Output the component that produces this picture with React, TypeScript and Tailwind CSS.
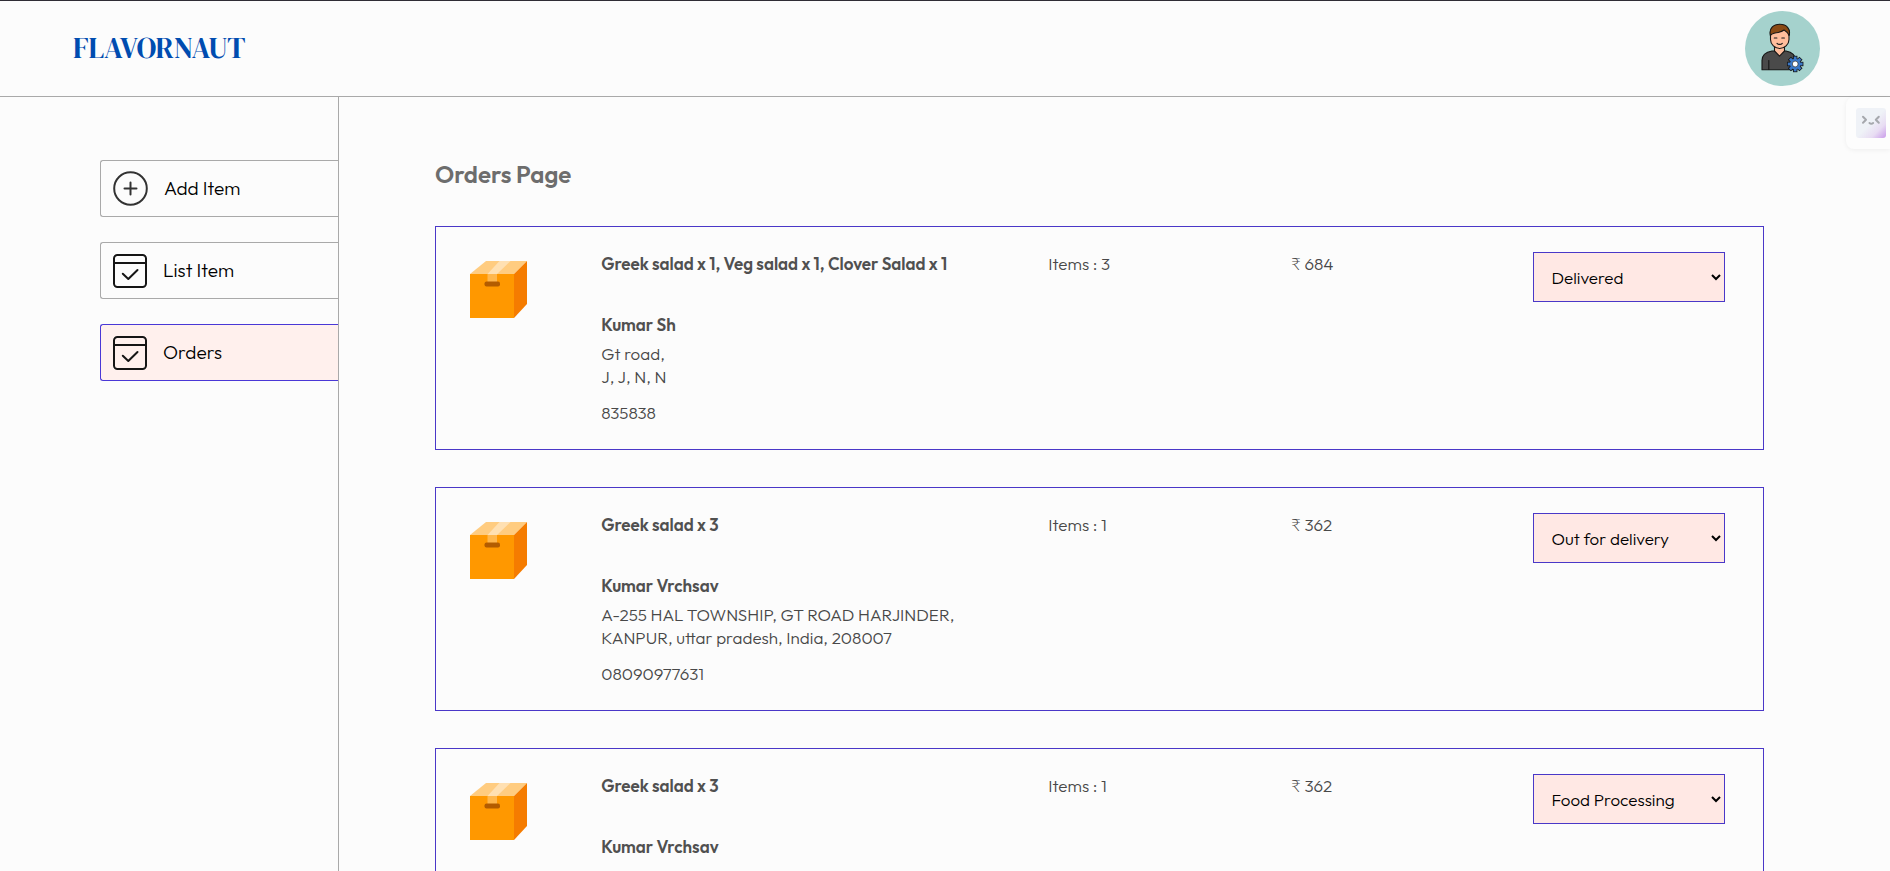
const statuses = ["Food Processing", "Out for delivery", "Delivered"];

type Order = {
  id: number;
  food: string;
  customer: string;
  street: string;
  region: string;
  phone: string;
  items: number;
  amount: number;
  status: string;
};

const orders: Order[] = [
  {
    id: 1,
    food: "Greek salad x 1, Veg salad x 1, Clover Salad x 1",
    customer: "Kumar Sh",
    street: "Gt road,",
    region: "J, J, N, N",
    phone: "835838",
    items: 3,
    amount: 684,
    status: "Delivered",
  },
  {
    id: 2,
    food: "Greek salad x 3",
    customer: "Kumar Vrchsav",
    street: "A-255 HAL TOWNSHIP, GT ROAD HARJINDER,",
    region: "KANPUR, uttar pradesh, India, 208007",
    phone: "08090977631",
    items: 1,
    amount: 362,
    status: "Out for delivery",
  },
  {
    id: 3,
    food: "Greek salad x 3",
    customer: "Kumar Vrchsav",
    street: "A-255 HAL TOWNSHIP, GT ROAD HARJINDER,",
    region: "KANPUR, uttar pradesh, India, 208007",
    phone: "08090977631",
    items: 1,
    amount: 362,
    status: "Food Processing",
  },
];

const gearTeeth = [0, 45, 90, 135, 180, 225, 270, 315];

function Avatar() {
  return (
    <svg viewBox="0 0 75 75" className="size-[75px]" role="img" aria-label="Admin profile">
      <circle cx="37.5" cy="37.5" r="37.5" fill="#a5d2cd" />
      <g stroke="#161616" strokeWidth="1.100" strokeLinejoin="round" strokeLinecap="round">
        <path d="M17 58.700V49.500c0-5.500 4.500-8.500 10-9.500h14c5.500 1 9.500 4 9.500 9.500v9.200z" fill="#4a4a4a" />
        <path d="M29.500 35.500h10V40l-5 5.200-5-5.200z" fill="#ffbd9c" />
        <path d="M23.800 58.500V49.500" fill="none" />
        <path d="M25.500 20v8.500c0 5 4.500 9 9.200 9s9.300-4 9.300-9V20l-5-3-9 1z" fill="#ffbd9c" />
        <path d="M25.400 24.500c-1.800-7.500 3.200-11.200 9.500-11.200 6.500 0 11 4.200 9.200 11.200-.8-2.500-2.500-4-5-5.500-3 2.500-6.500 2.500-10 3.200-1.700.4-3 1.200-3.700 2.300z" fill="#8a4a14" />
        <path d="M29.300 27h2.600M36.800 27h2.600M32 32.300c1.300 1.400 4 1.400 5.300 0" fill="none" />
      </g>
      <g transform="translate(50.200 53)">
        <g stroke="#161616" strokeWidth="1.600">
          {gearTeeth.map((angle) => (
            <rect key={angle} x="-1.400" y="-7.400" width="2.800" height="4" transform={`rotate(${angle})`} />
          ))}
          <circle r="5" />
        </g>
        <g fill="#3a78c8">
          {gearTeeth.map((angle) => (
            <rect key={angle} x="-1.400" y="-7.400" width="2.800" height="4" transform={`rotate(${angle})`} />
          ))}
          <circle r="5.200" />
        </g>
        <circle r="2.900" fill="#fff" stroke="#161616" strokeWidth=".6" />
      </g>
    </svg>
  );
}

function AddIcon() {
  return (
    <svg viewBox="0 0 35 35" className="size-[35px] shrink-0" fill="none" stroke="#333" strokeWidth="2" aria-hidden="true">
      <circle cx="17.500" cy="17.500" r="16.300" />
      <path d="M17.500 11.500v12M11.500 17.500h12" strokeLinecap="round" />
    </svg>
  );
}

function ListIcon() {
  return (
    <svg viewBox="0 0 34 34" className="size-[34px] shrink-0" fill="none" stroke="#151515" strokeWidth="2" aria-hidden="true">
      <rect x="1" y="1" width="32" height="32" rx="3.500" />
      <path d="M1 9h32" />
      <path d="M9.800 19.800l5.500 5.200 9.200-9" strokeLinecap="round" strokeLinejoin="round" />
    </svg>
  );
}

function ParcelIcon() {
  return (
    <svg viewBox="0 0 75 75" className="size-[75px]" aria-hidden="true">
      <path d="M25 9H66L53 22H9z" fill="#ffcc80" />
      <path d="M9 22H53V66H9z" fill="#ff9800" />
      <path d="M53 22L66 9V52L53 66z" fill="#f57c00" />
      <path d="M38.500 9H49.500L36 22H26.500z" fill="#ffe0b2" />
      <path d="M26.500 22H36V30H26.500z" fill="#ffb74d" />
      <rect x="23.500" y="29.500" width="15.500" height="5" rx="2" fill="#b35c00" />
    </svg>
  );
}

const menu = [
  { label: "Add Item", icon: <AddIcon />, active: false },
  { label: "List Item", icon: <ListIcon />, active: false },
  { label: "Orders", icon: <ListIcon />, active: true },
];

function Sidebar() {
  return (
    <nav className="w-[339px] shrink-0 border-r border-[#a9a9a9] pt-[63px] pl-[100px]">
      <ul className="flex flex-col gap-[25px]">
        {menu.map(({ label, icon, active }) => (
          <li key={label}>
            <a
              href="#"
              aria-current={active ? "page" : undefined}
              className={
                active
                  ? "flex h-[57px] items-center gap-4 rounded-l-[3px] border border-r-0 border-[#4a38d6] bg-[#fff0ed] pl-3 text-[19px] font-light text-black"
                  : "flex h-[57px] items-center gap-4 rounded-l-[3px] border border-r-0 border-[#a9a9a9] pl-3 text-[19px] font-light text-black"
              }
            >
              {icon}
              {label}
            </a>
          </li>
        ))}
      </ul>
    </nav>
  );
}

function OrderCard({ order }: { order: Order }) {
  return (
    <li className="grid grid-cols-[0.5fr_2fr_1fr_1fr_1fr] items-start gap-[38px] border border-[#4a38c8] p-[25px] text-[17px] leading-[23px] font-light text-[#484848]">
      <ParcelIcon />
      <div>
        <p className="font-semibold text-[#505050]">{order.food}</p>
        <p className="mt-[38px] font-semibold text-[#505050]">{order.customer}</p>
        <address className="mt-[6px] not-italic">
          <p>{order.street}</p>
          <p>{order.region}</p>
        </address>
        <p className="mt-[13px]">{order.phone}</p>
      </div>
      <p>Items : {order.items}</p>
      <p>₹ {order.amount}</p>
      <select
        aria-label={`Status of order ${order.id}`}
        defaultValue={order.status}
        className="h-[50px] w-full max-w-48 border border-[#4a38c8] bg-[#ffe8e4] pr-1 pl-[13px] text-[17px] font-light text-black"
      >
        {statuses.map((status) => (
          <option key={status}>{status}</option>
        ))}
      </select>
    </li>
  );
}

function AssistantTab() {
  return (
    <button
      type="button"
      aria-label="Open assistant"
      className="absolute top-[97px] right-0 rounded-l-lg bg-[#fdfdfd] py-[11px] pr-1 pl-[10px] shadow-[0_1px_5px_rgba(0,0,0,0.06)]"
    >
      <svg viewBox="0 0 30 30" className="size-[30px]" fill="none" aria-hidden="true">
        <defs>
          <linearGradient id="tab-fill" x1="0" y1="0" x2="1" y2="1">
            <stop offset="0.5" stopColor="#eff2f7" />
            <stop offset="0.750" stopColor="#e8dcf3" />
            <stop offset="1" stopColor="#c99aea" />
          </linearGradient>
        </defs>
        <rect width="30" height="30" rx="3" fill="url(#tab-fill)" />
        <path d="M7 8.800l3 3-3 3M22.800 8.800l-3 3 3 3M13.500 15c1 1 2.600 1 3.600 0" stroke="#a6a8ad" strokeWidth="2" strokeLinecap="round" strokeLinejoin="round" />
      </svg>
    </button>
  );
}

export default function App() {
  return (
    <div className="relative flex h-screen flex-col overflow-hidden bg-[#fcfcfc] font-['Outfit','Lato',sans-serif]">
      <header className="flex shrink-0 items-center justify-between border-t border-b border-t-[#2f2d35] border-b-[#a9a9a9] py-[10px] pr-[70px] pl-[73px]">
        <a href="#" className="font-['DM_Serif_Display','Liberation_Serif',serif] text-[29px] text-[#004cb0]">
          FLAVORNAUT
        </a>
        <Avatar />
      </header>
      <div className="flex min-h-0 flex-1">
        <Sidebar />
        <main className="min-w-0 flex-1 pt-[61px] pr-[126px] pl-24">
          <h1 className="text-2xl font-semibold text-[#6d6d6d]">Orders Page</h1>
          <ul className="mt-9 flex flex-col gap-[37px]">
            {orders.map((order) => (
              <OrderCard key={order.id} order={order} />
            ))}
          </ul>
        </main>
      </div>
      <AssistantTab />
    </div>
  );
}
